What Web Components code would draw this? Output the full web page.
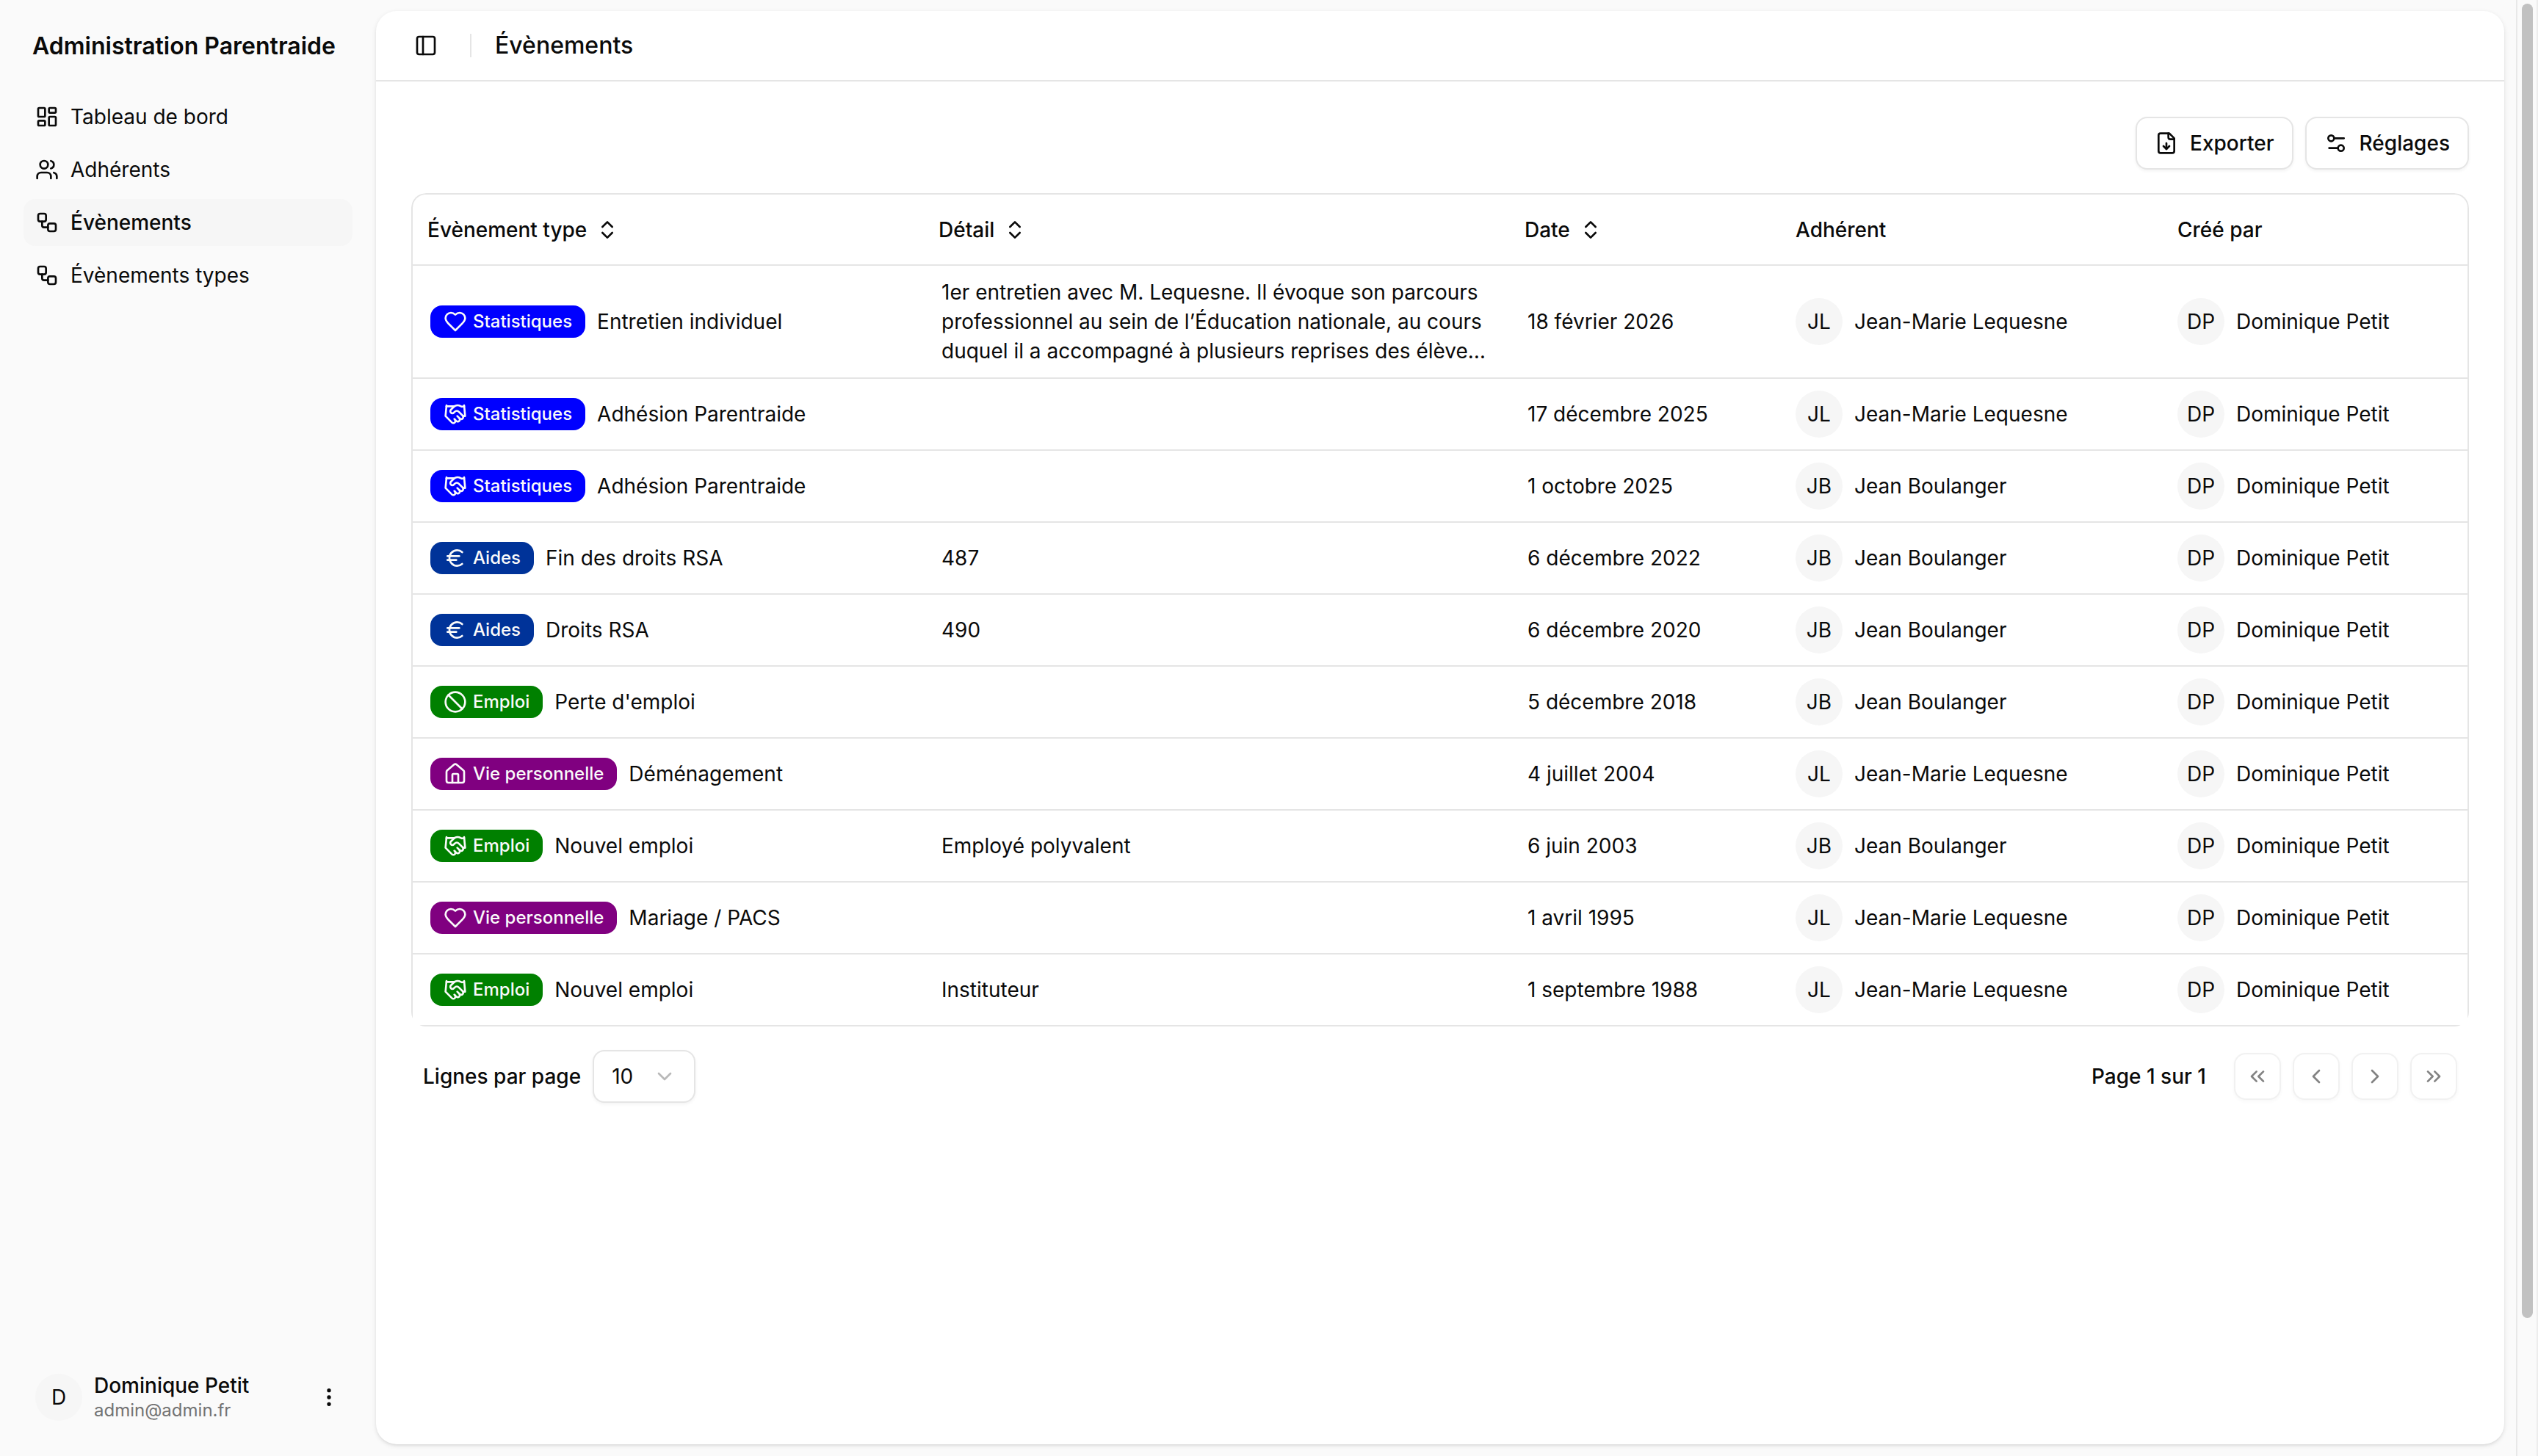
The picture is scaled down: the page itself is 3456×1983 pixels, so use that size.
<!DOCTYPE html>
<html lang="fr">
<head>
<meta charset="utf-8">
<title>Évènements - Administration Parentraide</title>
<style>
  body {
    margin: 0;
    background: #fafafa;
    color: #0a0a0a;
    font-family: Inter, sans-serif;
    font-size: 28px;
    line-height: 40px;
    -webkit-font-smoothing: antialiased;
  }
</style>
</head>
<body>
<admin-layout>
  <side-bar slot="sidebar" brand="Administration Parentraide">
    <nav-link icon="dashboard" href="#tableau">Tableau de bord</nav-link>
    <nav-link icon="users" href="#adherents">Adhérents</nav-link>
    <nav-link icon="workflow" href="#evenements" active>Évènements</nav-link>
    <nav-link icon="workflow" href="#types">Évènements types</nav-link>
    <user-menu slot="footer" name="Dominique Petit" email="admin@admin.fr" initials="D"></user-menu>
  </side-bar>
  <page-header>Évènements</page-header>
  <page-content>
    <tool-button slot="actions" icon="file-down">Exporter</tool-button>
    <tool-button slot="actions" icon="settings">Réglages</tool-button>
    <events-table></events-table>
    <table-pager></table-pager>
  </page-content>
</admin-layout>

<script>
const ICONS = {
  'dashboard': '<rect width="7" height="9" x="3" y="3" rx="1"/><rect width="7" height="5" x="14" y="3" rx="1"/><rect width="7" height="9" x="14" y="12" rx="1"/><rect width="7" height="5" x="3" y="16" rx="1"/>',
  'users': '<path d="M16 21v-2a4 4 0 0 0-4-4H6a4 4 0 0 0-4 4v2"/><circle cx="9" cy="7" r="4"/><path d="M22 21v-2a4 4 0 0 0-3-3.87"/><path d="M16 3.13a4 4 0 0 1 0 7.75"/>',
  'workflow': '<rect width="8" height="8" x="3" y="3" rx="2"/><path d="M7 11v4a2 2 0 0 0 2 2h4"/><rect width="8" height="8" x="13" y="13" rx="2"/>',
  'panel': '<rect width="18" height="18" x="3" y="3" rx="2"/><path d="M9 3v18"/>',
  'file-down': '<path d="M15 2H6a2 2 0 0 0-2 2v16a2 2 0 0 0 2 2h12a2 2 0 0 0 2-2V7Z"/><path d="M14 2v4a2 2 0 0 0 2 2h4"/><path d="M12 18v-6"/><path d="m9 15 3 3 3-3"/>',
  'settings': '<path d="M20 7h-9"/><path d="M14 17H5"/><circle cx="17" cy="17" r="3"/><circle cx="7" cy="7" r="3"/>',
  'sort': '<path d="m7 15 5 5 5-5"/><path d="m7 9 5-5 5 5"/>',
  'more': '<circle cx="12" cy="12" r="1"/><circle cx="12" cy="5" r="1"/><circle cx="12" cy="19" r="1"/>',
  'down': '<path d="m6 9 6 6 6-6"/>',
  'first': '<path d="m11 17-5-5 5-5"/><path d="m18 17-5-5 5-5"/>',
  'prev': '<path d="m15 18-6-6 6-6"/>',
  'next': '<path d="m9 18 6-6-6-6"/>',
  'last': '<path d="m6 17 5-5-5-5"/><path d="m13 17 5-5-5-5"/>',
  'heart': '<path d="M19 14c1.49-1.46 3-3.21 3-5.5A5.5 5.5 0 0 0 16.5 3c-1.76 0-3 .5-4.5 2-1.5-1.5-2.74-2-4.5-2A5.5 5.5 0 0 0 2 8.5c0 2.3 1.5 4.05 3 5.5l7 7Z"/>',
  'handshake': '<path d="m11 17 2 2a1 1 0 1 0 3-3"/><path d="m14 14 2.5 2.5a1 1 0 1 0 3-3l-3.88-3.88a3 3 0 0 0-4.24 0l-.88.88a1 1 0 1 1-3-3l2.81-2.81a5.79 5.79 0 0 1 7.06-.87l.47.28a2 2 0 0 0 1.42.25L21 4"/><path d="m21 3 1 11h-2"/><path d="M3 3 2 14l6.5 6.5a1 1 0 1 0 3-3"/><path d="M3 4h8"/>',
  'euro': '<path d="M4 10h12"/><path d="M4 14h9"/><path d="M19 6a7.7 7.7 0 0 0-5.2-2A7.9 7.9 0 0 0 6 12c0 4.4 3.5 8 7.8 8 2 0 3.8-.8 5.2-2"/>',
  'ban': '<circle cx="12" cy="12" r="10"/><path d="m4.9 4.9 14.2 14.2"/>',
  'house': '<path d="M15 21v-8a1 1 0 0 0-1-1h-4a1 1 0 0 0-1 1v8"/><path d="M3 10a2 2 0 0 1 .709-1.528l7-5.999a2 2 0 0 1 2.582 0l7 5.999A2 2 0 0 1 21 10v9a2 2 0 0 1-2 2H5a2 2 0 0 1-2-2z"/>'
};

class LineIcon extends HTMLElement {
  connectedCallback() {
    this.attachShadow({ mode: 'open' });
    this.shadowRoot.innerHTML = `
      <style>
        :host { display: block; flex: none; width: 32px; height: 32px; }
        svg { display: block; }
      </style>
      <svg width="32" height="32" viewBox="0 0 24 24" fill="none" stroke="currentColor" stroke-width="2" stroke-linecap="round" stroke-linejoin="round" aria-hidden="true">${ICONS[this.getAttribute('name')]}</svg>
    `;
  }
}
customElements.define('line-icon', LineIcon);

class AdminLayout extends HTMLElement {
  connectedCallback() {
    this.attachShadow({ mode: 'open' });
    this.shadowRoot.innerHTML = `
      <style>
        :host {
          display: grid;
          grid-template-columns: 512px minmax(0, 1fr) 30px;
          min-height: 100vh;
        }
        main {
          margin: 15px 16px 16px 0;
          background: white;
          border-radius: 28px;
          box-shadow: 0 2px 6px rgba(0, 0, 0, 0.1), 0 2px 4px -2px rgba(0, 0, 0, 0.1);
        }
      </style>
      <slot name="sidebar"></slot>
      <main><slot></slot></main>
      <scroll-rail></scroll-rail>
    `;
  }
}
customElements.define('admin-layout', AdminLayout);

class ScrollRail extends HTMLElement {
  connectedCallback() {
    this.attachShadow({ mode: 'open' });
    this.shadowRoot.innerHTML = `
      <style>
        :host {
          display: flex;
          flex-direction: column;
          box-sizing: border-box;
          padding: 5px 5px 5px 6px;
          border-left: 2px solid #e8e8e8;
          border-right: 2px solid #ededed;
          background: #fafafa;
        }
        .thumb { flex: 49; border-radius: 8px; background: #c1c1c1; }
        .rest { flex: 5; }
      </style>
      <div class="thumb"></div>
      <div class="rest"></div>
    `;
  }
}
customElements.define('scroll-rail', ScrollRail);

class SideBar extends HTMLElement {
  connectedCallback() {
    this.attachShadow({ mode: 'open' });
    this.shadowRoot.innerHTML = `
      <style>
        :host {
          display: flex;
          flex-direction: column;
          box-sizing: border-box;
          padding: 31px 32px 32px;
        }
        .brand {
          padding: 12px;
          font-size: 32px;
          font-weight: 600;
          color: inherit;
          text-decoration: none;
          white-space: nowrap;
        }
        nav {
          flex: 1;
          display: flex;
          flex-direction: column;
          gap: 8px;
          margin-top: 32px;
        }
      </style>
      <a class="brand" href="#accueil">${this.getAttribute('brand')}</a>
      <nav><slot></slot></nav>
      <slot name="footer"></slot>
    `;
  }
}
customElements.define('side-bar', SideBar);

class NavLink extends HTMLElement {
  connectedCallback() {
    this.attachShadow({ mode: 'open' });
    this.shadowRoot.innerHTML = `
      <style>
        :host { display: block; }
        a {
          display: flex;
          align-items: center;
          gap: 16px;
          height: 64px;
          padding: 0 16px;
          border-radius: 16px;
          color: inherit;
          text-decoration: none;
        }
        :host([active]) a { background: #f6f6f6; font-weight: 500; }
      </style>
      <a href="${this.getAttribute('href')}">
        <line-icon name="${this.getAttribute('icon')}"></line-icon>
        <span><slot></slot></span>
      </a>
    `;
  }
}
customElements.define('nav-link', NavLink);

class UserMenu extends HTMLElement {
  connectedCallback() {
    this.attachShadow({ mode: 'open' });
    this.shadowRoot.innerHTML = `
      <style>
        :host { display: block; }
        button {
          display: flex;
          align-items: center;
          gap: 16px;
          width: 100%;
          height: 96px;
          padding: 0 16px;
          border: 0;
          background: none;
          color: inherit;
          font: inherit;
          text-align: left;
        }
        .text { flex: 1; display: grid; }
        .name { font-weight: 500; line-height: 36px; }
        .email { font-size: 24px; line-height: 32px; color: #737373; }
      </style>
      <button type="button">
        <round-avatar>${this.getAttribute('initials')}</round-avatar>
        <span class="text">
          <span class="name">${this.getAttribute('name')}</span>
          <span class="email">${this.getAttribute('email')}</span>
        </span>
        <line-icon name="more"></line-icon>
      </button>
    `;
  }
}
customElements.define('user-menu', UserMenu);

class RoundAvatar extends HTMLElement {
  connectedCallback() {
    this.attachShadow({ mode: 'open' });
    this.shadowRoot.innerHTML = `
      <style>
        :host {
          display: flex;
          flex: none;
          align-items: center;
          justify-content: center;
          width: 64px;
          height: 64px;
          border-radius: 50%;
          background: #f6f6f6;
        }
      </style>
      <slot></slot>
    `;
  }
}
customElements.define('round-avatar', RoundAvatar);

class PageHeader extends HTMLElement {
  connectedCallback() {
    this.attachShadow({ mode: 'open' });
    this.shadowRoot.innerHTML = `
      <style>
        :host {
          display: flex;
          align-items: center;
          gap: 32px;
          box-sizing: border-box;
          height: 96px;
          padding: 0 40px;
          border-bottom: 2px solid #e5e5e5;
        }
        button {
          display: flex;
          align-items: center;
          justify-content: center;
          width: 56px;
          height: 56px;
          padding: 0;
          border: 0;
          background: none;
          color: inherit;
        }
        .separator { width: 2px; height: 32px; background: #e5e5e5; }
        h1 { margin: 0; font-size: 32px; font-weight: 500; }
      </style>
      <button type="button" aria-label="Menu"><line-icon name="panel"></line-icon></button>
      <div class="separator"></div>
      <h1><slot></slot></h1>
    `;
  }
}
customElements.define('page-header', PageHeader);

class PageContent extends HTMLElement {
  connectedCallback() {
    this.attachShadow({ mode: 'open' });
    this.shadowRoot.innerHTML = `
      <style>
        :host {
          display: flex;
          flex-direction: column;
          gap: 32px;
          padding: 48px;
        }
        .actions { display: flex; justify-content: flex-end; gap: 16px; }
      </style>
      <div class="actions"><slot name="actions"></slot></div>
      <slot></slot>
    `;
  }
}
customElements.define('page-content', PageContent);

class ToolButton extends HTMLElement {
  connectedCallback() {
    this.attachShadow({ mode: 'open' });
    this.shadowRoot.innerHTML = `
      <style>
        :host { display: block; }
        button {
          display: flex;
          align-items: center;
          gap: 16px;
          box-sizing: border-box;
          height: 72px;
          padding: 0 24px;
          border: 2px solid #e5e5e5;
          border-radius: 16px;
          background: white;
          box-shadow: 0 2px 4px rgba(0, 0, 0, 0.05);
          color: inherit;
          font: inherit;
          font-weight: 500;
        }
      </style>
      <button type="button">
        <line-icon name="${this.getAttribute('icon')}"></line-icon>
        <span><slot></slot></span>
      </button>
    `;
  }
}
customElements.define('tool-button', ToolButton);

const CATEGORY_COLORS = {
  'Statistiques': '#0000ff',
  'Aides': '#003399',
  'Emploi': '#008000',
  'Vie personnelle': '#800080'
};

class TypeBadge extends HTMLElement {
  connectedCallback() {
    const category = this.getAttribute('category');
    this.attachShadow({ mode: 'open' });
    this.shadowRoot.innerHTML = `
      <style>
        :host { display: flex; align-items: center; gap: 16px; white-space: nowrap; }
        .badge {
          display: flex;
          align-items: center;
          gap: 8px;
          padding: 6px 18px;
          border-radius: 16px;
          background: ${CATEGORY_COLORS[category]};
          color: #fafafa;
          font-size: 24px;
          font-weight: 500;
          line-height: 32px;
        }
      </style>
      <span class="badge"><line-icon name="${this.getAttribute('icon')}"></line-icon>${category}</span>
      <span><slot></slot></span>
    `;
  }
}
customElements.define('type-badge', TypeBadge);

class PersonName extends HTMLElement {
  connectedCallback() {
    const initials = this.textContent.split(' ').map(part => part[0]).join('');
    this.attachShadow({ mode: 'open' });
    this.shadowRoot.innerHTML = `
      <style>
        :host { display: flex; align-items: center; gap: 16px; white-space: nowrap; }
      </style>
      <round-avatar>${initials}</round-avatar>
      <span><slot></slot></span>
    `;
  }
}
customElements.define('person-name', PersonName);

// category, icon, type, detail, date, member
const EVENTS = [
  ['Statistiques', 'heart', 'Entretien individuel', '1er entretien avec M. Lequesne. Il évoque son parcours professionnel au sein de l’Éducation nationale, au cours duquel il a accompagné à plusieurs reprises des élève…', '18 février 2026', 'Jean-Marie Lequesne'],
  ['Statistiques', 'handshake', 'Adhésion Parentraide', '', '17 décembre 2025', 'Jean-Marie Lequesne'],
  ['Statistiques', 'handshake', 'Adhésion Parentraide', '', '1 octobre 2025', 'Jean Boulanger'],
  ['Aides', 'euro', 'Fin des droits RSA', '487', '6 décembre 2022', 'Jean Boulanger'],
  ['Aides', 'euro', 'Droits RSA', '490', '6 décembre 2020', 'Jean Boulanger'],
  ['Emploi', 'ban', "Perte d'emploi", '', '5 décembre 2018', 'Jean Boulanger'],
  ['Vie personnelle', 'house', 'Déménagement', '', '4 juillet 2004', 'Jean-Marie Lequesne'],
  ['Emploi', 'handshake', 'Nouvel emploi', 'Employé polyvalent', '6 juin 2003', 'Jean Boulanger'],
  ['Vie personnelle', 'heart', 'Mariage / PACS', '', '1 avril 1995', 'Jean-Marie Lequesne'],
  ['Emploi', 'handshake', 'Nouvel emploi', 'Instituteur', '1 septembre 1988', 'Jean-Marie Lequesne']
];

class EventsTable extends HTMLElement {
  connectedCallback() {
    const sortable = label => `<th scope="col"><button type="button">${label}<line-icon name="sort"></line-icon></button></th>`;
    const rows = EVENTS.map(([category, icon, type, detail, date, member]) => `
      <tr>
        <td><type-badge category="${category}" icon="${icon}">${type}</type-badge></td>
        <td>${detail}</td>
        <td>${date}</td>
        <td class="person"><person-name>${member}</person-name></td>
        <td class="person"><person-name>Dominique Petit</person-name></td>
      </tr>`).join('');
    this.attachShadow({ mode: 'open' });
    this.shadowRoot.innerHTML = `
      <style>
        :host {
          display: block;
          overflow: hidden;
          border-radius: 20px;
        }
        .frame {
          border: 2px solid #e5e5e5;
          border-bottom: 0;
          border-radius: 20px 20px 0 0;
        }
        table {
          width: 100%;
          table-layout: fixed;
          border-collapse: separate;
          border-spacing: 0;
        }
        .type { width: 696px; }
        .date { width: 373px; }
        .member { width: 520px; }
        .author { width: 411px; }
        th, td {
          box-sizing: border-box;
          border-bottom: 2px solid #e5e5e5;
          text-align: left;
          vertical-align: middle;
        }
        th { height: 97px; padding: 0 16px; font-weight: 500; }
        th button {
          display: flex;
          align-items: center;
          gap: 12px;
          padding: 0 4px;
          border: 0;
          background: none;
          color: inherit;
          font: inherit;
        }
        td { height: 98px; padding: 16px 16px 16px 24px; }
        td.person { padding: 16px; }
      </style>
      <div class="frame">
        <table>
          <colgroup><col class="type"><col><col class="date"><col class="member"><col class="author"></colgroup>
          <thead>
            <tr>${sortable('Évènement type')}${sortable('Détail')}${sortable('Date')}<th scope="col">Adhérent</th><th scope="col">Créé par</th></tr>
          </thead>
          <tbody>${rows}</tbody>
        </table>
      </div>
    `;
  }
}
customElements.define('events-table', EventsTable);

class TablePager extends HTMLElement {
  connectedCallback() {
    this.attachShadow({ mode: 'open' });
    this.shadowRoot.innerHTML = `
      <style>
        :host {
          display: flex;
          align-items: center;
          justify-content: space-between;
          padding: 0 16px;
        }
        .size, .pages { display: flex; align-items: center; gap: 16px; }
        label, .status { font-weight: 500; }
        .select { display: grid; align-items: center; }
        .select > * { grid-area: 1 / 1; }
        .select line-icon {
          justify-self: end;
          margin-right: 26px;
          color: #b9b9b9;
          pointer-events: none;
        }
        select {
          appearance: none;
          box-sizing: border-box;
          width: 140px;
          height: 72px;
          padding: 0 24px;
          border: 2px solid #e5e5e5;
          border-radius: 16px;
          background: white;
          box-shadow: 0 2px 4px rgba(0, 0, 0, 0.05);
          color: inherit;
          font: inherit;
        }
        .status { width: 200px; text-align: center; }
        .pages button {
          display: flex;
          align-items: center;
          justify-content: center;
          box-sizing: border-box;
          width: 64px;
          height: 64px;
          padding: 0;
          border: 2px solid #e5e5e5;
          border-radius: 16px;
          background: white;
          box-shadow: 0 2px 4px rgba(0, 0, 0, 0.05);
          color: inherit;
        }
        .pages button:disabled { opacity: 0.5; }
      </style>
      <div class="size">
        <label for="rows">Lignes par page</label>
        <div class="select">
          <select id="rows"><option>10</option></select>
          <line-icon name="down"></line-icon>
        </div>
      </div>
      <div class="pages">
        <span class="status">Page 1 sur 1</span>
        <button type="button" aria-label="Première page" disabled><line-icon name="first"></line-icon></button>
        <button type="button" aria-label="Page précédente" disabled><line-icon name="prev"></line-icon></button>
        <button type="button" aria-label="Page suivante" disabled><line-icon name="next"></line-icon></button>
        <button type="button" aria-label="Dernière page" disabled><line-icon name="last"></line-icon></button>
      </div>
    `;
  }
}
customElements.define('table-pager', TablePager);
</script>
</body>
</html>
